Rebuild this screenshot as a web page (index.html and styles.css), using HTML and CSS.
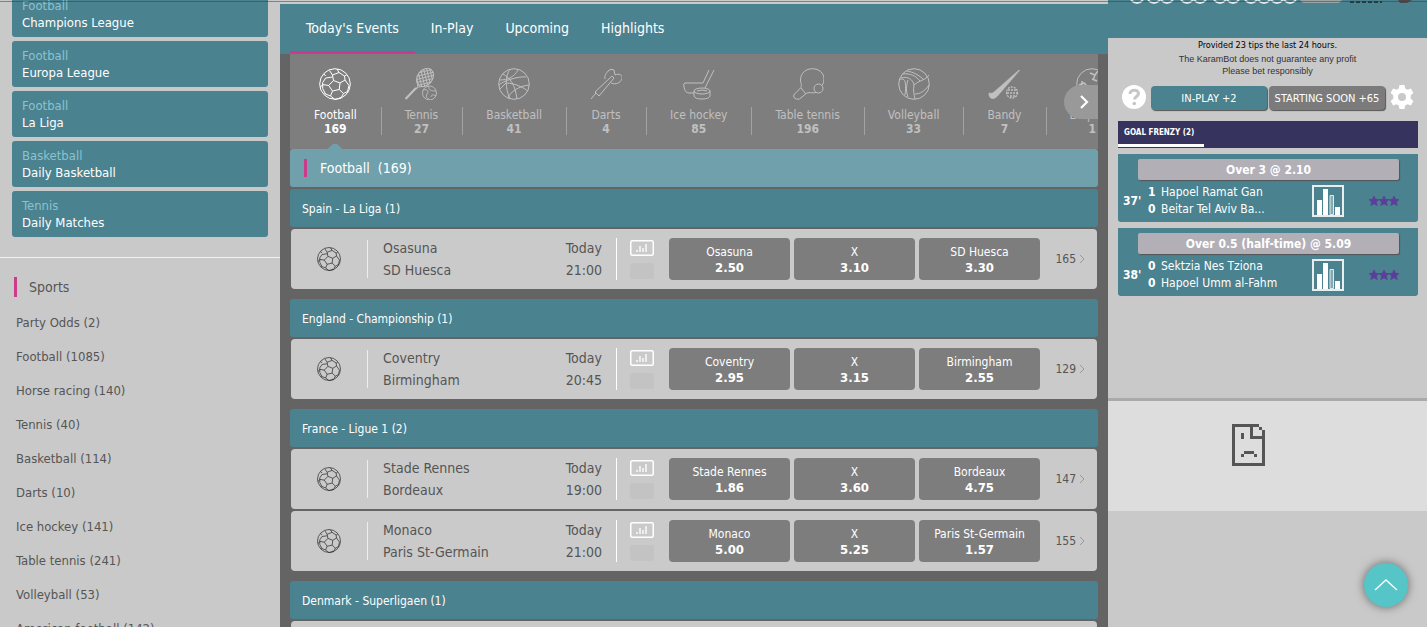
FILE: index.html
```
<!DOCTYPE html>
<html lang="en">
<head>
<meta charset="utf-8">
<title>Today's Events</title>
<link rel="stylesheet" href="styles.css">
</head>
<body>
<svg class="defs" aria-hidden="true">
<symbol id="ball" viewBox="0 0 32 32"><g fill="none" stroke="currentColor" stroke-linejoin="round"><circle cx="16" cy="16" r="15.3"/><path d="M14.500 12.500l6.500 2.500-.8 6.500-6.700 1.500-3.800-5.500zM14.500 12.500l-1-5.500M21 15l5-3M20.200 21.500l4.300 4M13.500 23l-2 5M9.700 17.500l-6-1M13.500 7l6.500-2.500 5.500 3.500.5 4 4 5.500-1.500 6-4 2-2.500 4.500-6 1.500-4.500-3.500-5-2-2.800-5.500 0-6 3-4.500 6.800-1M20 4.500l-2-3.500M13.500 7l-3-4.500M25.500 8l2-1M28.500 23.500l1 .5M22 30l-1.500-.5M6.500 26l-1-.5M3.700 16.500l-2.500 3M6.700 8l-1.700-2"/></g></symbol>
<symbol id="stats" viewBox="0 0 24 16"><rect x=".75" y=".75" width="22.500" height="14.500" rx="1.500" fill="none" stroke="#fff" stroke-width="1.500"/><path d="M6 12h2v-2h-2zM9 12h2v-6h-2zM12 12h2v-4h-2zM15 12h2v-8h-2z" fill="#eee"/></symbol>
<symbol id="chart" viewBox="0 0 32 32"><rect x="1" y="1" width="30" height="30" fill="none" stroke="#e8eeee" stroke-width="2"/><path d="M5 15h5v15h-5zM11 4h5v26h-5zM23 22h5v8h-5z" fill="#fff"/><path d="M18 10.500h3.500v19h-3.500z" fill="#84a9b1" stroke="#dfe9ea"/></symbol>
<symbol id="stars" viewBox="0 0 30 10"><path fill="#5b3e99" stroke="#5b3e99" stroke-width=".7" d="M5 0l1.500 3.300 3.500.3-2.700 2.400.9 3.600-3.200-1.900-3.200 1.900.9-3.600-2.700-2.400 3.500-.3zM15 0l1.500 3.300 3.500.3-2.700 2.400.9 3.600-3.200-1.900-3.200 1.900.9-3.600-2.700-2.400 3.500-.3zM25 0l1.500 3.300 3.500.3-2.700 2.400.9 3.600-3.200-1.900-3.200 1.900.9-3.600-2.700-2.400 3.500-.3z"/></symbol>
</svg>
<div class="app">
<aside class="side">
  <nav class="quick" aria-label="Quick links">
    <a href="#"><span>Football</span><b>Champions League</b></a>
    <a href="#"><span>Football</span><b>Europa League</b></a>
    <a href="#"><span>Football</span><b>La Liga</b></a>
    <a href="#"><span>Basketball</span><b>Daily Basketball</b></a>
    <a href="#"><span>Tennis</span><b>Daily Matches</b></a>
  </nav>
  <section class="sports">
    <h2>Sports</h2>
    <nav aria-label="Sports">
      <a href="#">Party Odds (2)</a><a href="#">Football (1085)</a><a href="#">Horse racing (140)</a><a href="#">Tennis (40)</a><a href="#">Basketball (114)</a><a href="#">Darts (10)</a><a href="#">Ice hockey (141)</a><a href="#">Table tennis (241)</a><a href="#">Volleyball (53)</a><a href="#">American football (142)</a>
    </nav>
  </section>
</aside>
<main class="main">
  <nav class="tabs" aria-label="Events"><a class="on" href="#">Today's Events</a><a href="#">In-Play</a><a href="#">Upcoming</a><a href="#">Highlights</a></nav>
  <div class="content">
    <div class="carousel">
      <button class="sport on"><svg><use href="#ball"/></svg><span>Football</span><b>169</b></button>
      <button class="sport"><svg viewBox="0 0 32 32"><defs><pattern id="mesh" width="3" height="3" patternUnits="userSpaceOnUse" patternTransform="rotate(38)"><path d="M0 0h3M0 0v3" stroke="currentColor" stroke-width="1.800"/></pattern></defs><ellipse cx="20" cy="9.500" rx="7.500" ry="10" transform="rotate(38 20 9.500)" fill="url(#mesh)" stroke="currentColor"/><path d="M13 15q0 4-2 6M17.500 18.500q-4-.5-6.500 2.500" fill="none" stroke="currentColor"/><path d="M11 20l-10.500 11" stroke="currentColor" stroke-width="2.200"/><g fill="none" stroke="currentColor" stroke-width=".9"><circle cx="24.500" cy="25" r="7"/><path d="M18 22c5-1 6 1 4 4s1 5 3 5.500M24 18c-1 4 2 5 7 5M31 28c-3-2-5-1-5 1"/></g></svg><span>Tennis</span><b>27</b></button>
      <button class="sport"><svg viewBox="0 0 32 32"><g fill="none" stroke="currentColor"><circle cx="16" cy="16" r="15.300"/><path d="M5 6c7 4 12 10 14 25M12 1c-5 7-5 19 0 30M1 17c4-4 19-9 27-8M2 12c8 0 14-3 18-10M8 15c9 0 18 5 22 8M10 30c2-6 11-12 21-13M2 21l6-6"/></g></svg><span>Basketball</span><b>41</b></button>
      <button class="sport"><svg viewBox="0 0 32 32"><g fill="none" stroke="currentColor"><path d="M1 31l5-6M5 24l4 4L24 10l-2-2zM15 11c-1-4 2-6 3-8q3-3 6-1l1 5c4-2 8 0 7 4-2 4-6 6-11 4"/></g></svg><span>Darts</span><b>4</b></button>
      <button class="sport"><svg viewBox="0 0 32 32"><g fill="none" stroke="currentColor"><path d="M26 2l-6 13H2q-2 0-1 4 1 6 5 6h5M31 2l-9 18"/><ellipse cx="19" cy="23" rx="8" ry="3"/><path d="M11 23v5q1 3 8 3t8-3v-5M14 23q5-2 10 0"/></g></svg><span>Ice hockey</span><b>85</b></button>
      <button class="sport"><svg viewBox="0 0 32 32"><g fill="none" stroke="currentColor"><path d="M24.500 24.500c-5 1-8-1-11 1.500l-6 5q-3 1-5-1-2-2 0-4l6-6c2-2 0-5 0-8C8.500 5 14 .7 20.500 .7 27 .7 32 5 32 11q0 4-2 6.500M9 20l5 6"/><circle cx="26.500" cy="20.500" r="4.500"/></g></svg><span>Table tennis</span><b>196</b></button>
      <button class="sport"><svg viewBox="0 0 32 32"><g fill="none" stroke="currentColor"><circle cx="16" cy="16" r="15.300"/><path d="M16 17c-1-6-7-9-13-7M16 17c4-4 12-5 15-10M16 17c-1 5 0 10 1 14M1 12c5-3 8 0 6 15M9 3c6 1 12 4 17 9M5 6c7-1 13 2 17 7M10 12c-2 6-2 12 0 17M17 26c5 0 10-3 14-9"/></g></svg><span>Volleyball</span><b>33</b></button>
      <button class="sport"><svg viewBox="0 0 32 32"><path d="M31.500 2.500L9.500 28q-3 4-7 2-2-2-1.500-5 3 1 5-1L31 2z" fill="currentColor" stroke="currentColor" stroke-width=".6"/><circle cx="24" cy="24.500" r="5.500" fill="none" stroke="currentColor" stroke-width="1.300" stroke-dasharray="2 1"/><path d="M20 22h9M19 25h10M22 28h5" stroke="currentColor" stroke-width="1.400" stroke-dasharray="2 1"/></svg><span>Bandy</span><b>7</b></button>
      <button class="sport"><svg viewBox="0 0 32 32"><g fill="none" stroke="currentColor"><circle cx="16" cy="16" r="15.300"/><path d="M14 5l5 2-2 5M19 7l3-4M3 17l5-2 3 3M6 13v6M16 11l5 2" stroke-width="1.500"/></g></svg><span>E-Sports</span><b>1</b></button>
      <button class="next" aria-label="More sports"><svg viewBox="0 0 14 14"><path d="M4 1l6 6-6 6" fill="none" stroke="#fff" stroke-width="2.200"/></svg></button>
    </div>
    <h1 class="title">Football&nbsp; (169)</h1>
    <section class="league"><h2>Spain - La Liga (1)</h2>
      <article class="match"><svg class="ico"><use href="#ball"/></svg><div class="teams"><span>Osasuna</span><span>SD Huesca</span></div><div class="when"><span>Today</span><time>21:00</time></div><div class="media"><svg><use href="#stats"/></svg><i></i></div><div class="odds"><button>Osasuna<b>2.50</b></button><button>X<b>3.10</b></button><button>SD Huesca<b>3.30</b></button></div><a class="more" href="#">165<svg viewBox="0 0 6 10"><path d="M1 1l4 4-4 4"/></svg></a></article>
    </section>
    <section class="league"><h2>England - Championship (1)</h2>
      <article class="match"><svg class="ico"><use href="#ball"/></svg><div class="teams"><span>Coventry</span><span>Birmingham</span></div><div class="when"><span>Today</span><time>20:45</time></div><div class="media"><svg><use href="#stats"/></svg><i></i></div><div class="odds"><button>Coventry<b>2.95</b></button><button>X<b>3.15</b></button><button>Birmingham<b>2.55</b></button></div><a class="more" href="#">129<svg viewBox="0 0 6 10"><path d="M1 1l4 4-4 4"/></svg></a></article>
    </section>
    <section class="league"><h2>France - Ligue 1 (2)</h2>
      <article class="match"><svg class="ico"><use href="#ball"/></svg><div class="teams"><span>Stade Rennes</span><span>Bordeaux</span></div><div class="when"><span>Today</span><time>19:00</time></div><div class="media"><svg><use href="#stats"/></svg><i></i></div><div class="odds"><button>Stade Rennes<b>1.86</b></button><button>X<b>3.60</b></button><button>Bordeaux<b>4.75</b></button></div><a class="more" href="#">147<svg viewBox="0 0 6 10"><path d="M1 1l4 4-4 4"/></svg></a></article>
      <article class="match"><svg class="ico"><use href="#ball"/></svg><div class="teams"><span>Monaco</span><span>Paris St-Germain</span></div><div class="when"><span>Today</span><time>21:00</time></div><div class="media"><svg><use href="#stats"/></svg><i></i></div><div class="odds"><button>Monaco<b>5.00</b></button><button>X<b>5.25</b></button><button>Paris St-Germain<b>1.57</b></button></div><a class="more" href="#">155<svg viewBox="0 0 6 10"><path d="M1 1l4 4-4 4"/></svg></a></article>
    </section>
    <section class="league"><h2>Denmark - Superligaen (1)</h2><article class="match"></article></section>
  </div>
</main>
<aside class="bot">
  <header class="banner"><svg viewBox="0 0 300 4"><g fill="none" stroke="#e4eaea" stroke-width="1.800"><path d="M11 0q6 6 12 0M28 0q6 6 12 0M41 0q6 6 12 0M61 0q6 6 12 0M74 0q6 6 12 0M94 0q6 6 12 0M107 0q6 6 12 0M125 0q6 6 12 0M138 0q6 6 12 0M151 0q6 6 12 0M164 0q6 6 12 0"/></g><path d="M180 0h42l-3 3h-36z" fill="#9aa3a6"/><path d="M230 2h32" stroke="#25383c" stroke-width="2" stroke-dasharray="4 2"/><path d="M278 0h14l-5 3h-7z" fill="#4a4a4d"/></svg></header>
  <div class="info"><p class="tips">Provided 23 tips the last 24 hours.</p><p>The KaramBot does not guarantee any profit</p><p>Please bet responsibly</p></div>
  <div class="modes">
    <button class="icon" aria-label="Help"><svg viewBox="0 0 24 24"><circle cx="12" cy="12" r="12" fill="#fff"/><path d="M8 9c0-5 8.500-5 8.500-.5 0 3-4 3-4 6" fill="none" stroke="#c6c6c6" stroke-width="3"/><circle cx="12.300" cy="18.500" r="1.800" fill="#c6c6c6"/></svg></button>
    <button class="mode on">IN-PLAY +2</button><button class="mode">STARTING SOON +65</button>
    <button class="icon" aria-label="Settings"><svg viewBox="0 0 24 24"><path fill="#fff" fill-rule="evenodd" d="M9.500 0h5l.7 3.500 2.300 1.300 3.400-1.300 2.500 4.400-2.700 2.400v3.400l2.700 2.400-2.500 4.400-3.400-1.300-2.300 1.300-.7 3.500h-5l-.7-3.500-2.300-1.300-3.400 1.300-2.500-4.400 2.700-2.400v-3.400l-2.700-2.400 2.500-4.400 3.400 1.300 2.300-1.300zM12 8a4 4 0 1 0 0 8 4 4 0 0 0 0-8z"/></svg></button>
  </div>
  <div class="frenzy"><a href="#">GOAL FRENZY (2)</a></div>
  <article class="tip"><button>Over 3 @ 2.10</button><div class="row"><b class="min">37'</b><div class="score"><b>1</b><span>Hapoel Ramat Gan</span><b>0</b><span>Beitar Tel Aviv Ba...</span></div><svg class="chart"><use href="#chart"/></svg><svg class="stars"><use href="#stars"/></svg></div></article>
  <article class="tip"><button>Over 0.5 (half-time) @ 5.09</button><div class="row"><b class="min">38'</b><div class="score"><b>0</b><span>Sektzia Nes Tziona</span><b>0</b><span>Hapoel Umm al-Fahm</span></div><svg class="chart"><use href="#chart"/></svg><svg class="stars"><use href="#stars"/></svg></div></article>
  <div class="frame"><svg viewBox="0 0 33 42" shape-rendering="crispEdges"><path fill="#555" d="M0 0h27v3h3v3h3v36H0zM3 3v36h27V15H18V3zM21 3v9h9V6h-3V3zM9 9h3v6H9zM12 27h10v3h3v3h-3v-3H12v3H9v-3h3z" fill-rule="evenodd"/></svg></div>
</aside>
</div>
<button class="up" aria-label="Back to top"><svg viewBox="0 0 24 12"><path d="M1 11L12 1l11 10" fill="none" stroke="#fff" stroke-width="1.300"/></svg></button>
</body>
</html>
```
FILE: styles.css
```
* { box-sizing: border-box; }
body { margin: 0; padding-bottom: 5px; height: 100vh; overflow: hidden; background: #fff; font: 12px/16px "DejaVu Sans Condensed", "Noto Sans", sans-serif; color: #555; }
h1, h2, p { margin: 0; font-weight: 400; }
a { color: inherit; text-decoration: none; }
button { font: inherit; color: #fff; border: 0; padding: 0; }
svg { display: block; }
.defs { position: absolute; width: 0; height: 0; }
.app { display: grid; grid-template-columns: 280px minmax(0, 1fr) 319px; height: 100%; overflow: hidden; }
.app::before { content: ""; position: absolute; top: 1px; left: 0; right: 0; height: 1px; background: rgba(60, 60, 60, .5); z-index: 2; }
.app > * { min-height: 0; overflow: hidden; }
.side, .bot { background: #c9c9c9; }
.quick { display: flex; flex-direction: column; justify-content: flex-end; gap: 4px; padding: 0 12px; height: 237px; }
.quick a { flex: none; display: flex; flex-direction: column; height: 46px; padding: 6px 10px; border-radius: 3px; background: #4b8290; font-size: 13px; line-height: 17px; }
.quick span { color: #8ac3cf; }
.quick b { color: #fff; font-weight: 400; }
.sports { margin-top: 20px; border-top: 1px solid #f2f2f2; padding: 19px 16px 0 14px; }
.sports h2 { border-left: 3px solid #cc3b8b; padding-left: 12px; font-size: 14px; line-height: 20px; }
.sports nav { display: flex; flex-direction: column; padding: 9px 2px; }
.sports nav a { font-size: 13px; line-height: 34px; white-space: nowrap; }
.main { background: #646464; border-top: 4px solid #cacaca; }
.tabs { display: flex; height: 50px; padding: 0 10px; background: #4b8290; color: #fff; font-size: 14px; line-height: 48px; }
.tabs a { padding: 0 16px; border-bottom: 3px solid transparent; }
.tabs .on { border-color: #cc3b8b; }
.content { padding: 0 10px; }
.carousel { position: relative; display: flex; height: 95px; overflow: hidden; background: #7e7e7e; }
.sport { position: relative; flex: none; display: flex; flex-direction: column; align-items: center; padding: 14px 24px 0; background: none; color: #c0c0c0; line-height: 14px; }
.sport svg { width: 32px; height: 32px; margin-bottom: 8px; }
.sport + .sport::before { content: ""; position: absolute; left: 0; top: 53px; width: 1px; height: 28px; background: #a2a2a2; }
.sport.on { color: #fff; }
.sport.on::after { content: ""; position: absolute; left: 50%; bottom: -12px; width: 16px; height: 16px; margin-left: -8px; border-radius: 5px; transform: rotate(45deg); background: #70a0ac; }
.next { position: absolute; right: 0; top: 31px; width: 34px; height: 34px; padding-left: 5px; display: grid; place-items: center; background: #999; border-radius: 17px 0 0 17px; }
.next svg { width: 14px; height: 14px; }
.title { position: relative; height: 38px; padding: 0 14px; display: flex; align-items: center; border-radius: 3px; background: #70a0ac; color: #fff; font-size: 14px; }
.title::before { content: ""; width: 3px; height: 18px; margin-right: 13px; background: #cc3b8b; }
.league { margin-bottom: 10px; padding-top: 2px; }
.league + .league { padding-top: 0; }
.league h2 { height: 38px; padding: 0 12px; border-radius: 3px; background: #4b8290; color: #fff; font-size: 12px; line-height: 40px; }
.match { display: flex; align-items: center; height: 60px; margin: 2px 1px 0; border-radius: 4px; background: #cacaca; }
.ico { flex: none; width: 24px; height: 24px; margin: 0 26px; color: #333; }
.teams, .when { display: flex; flex-direction: column; font-size: 14px; line-height: 22px; }
.teams { flex: 1; border-left: 1px solid #eee; padding-left: 15px; height: 38px; justify-content: center; }
.when { border-right: 1px solid #fff; padding-right: 14px; text-align: right; height: 42px; justify-content: center; }
.media { display: flex; flex-direction: column; gap: 7px; margin: 0 15px 0 13px; }
.media svg { width: 24px; height: 16px; }
.media i { width: 24px; height: 16px; border-radius: 2px; background: #c3c3c3; }
.odds { display: flex; gap: 4px; }
.odds button { display: flex; flex-direction: column; align-items: center; justify-content: center; width: 121px; height: 42px; padding-top: 1px; border-radius: 4px; background: #7d7d7d; }
.odds b { font-size: 13px; }
.more { display: flex; align-items: center; justify-content: flex-end; gap: 3px; width: 57px; padding-right: 12px; }
.more svg { width: 6px; height: 10px; fill: none; stroke: #999; }
.banner { height: 38px; background: #4a828f; }
.banner svg { width: 300px; height: 4px; margin-left: 12px; }
.info { font-family: "Liberation Sans", sans-serif; font-size: 9px; line-height: 12px; text-align: center; color: #333; }
.info .tips { font: 9px/15px "DejaVu Sans Condensed", sans-serif; color: #000; }
.modes { display: flex; justify-content: center; gap: 2px; padding: 6px 13px 0 14px; }
.icon { width: 24px; background: none; }
.icon:first-child { margin-right: auto; }
.icon:last-child { margin-left: auto; }
.icon svg { width: 24px; height: 24px; }
.mode { width: 116px; height: 24px; margin-top: 3px; padding-top: 1px; border-radius: 4px; background: #7b7b7b; box-shadow: 1px 1px 1px #555; font-size: 11px; white-space: nowrap; }
.mode.on { background: #4a828f; }
.frenzy { height: 27px; margin: 11px 9px 0 10px; background: #36345e; color: #fff; font-size: 8px; font-weight: 700; }
.frenzy a { display: block; width: 86px; height: 26px; padding-left: 6px; border-bottom: 3px solid #fff; line-height: 23px; }
.tip { height: 68px; margin: 6px 9px 0 10px; padding: 5px 0 0; background: #4a828f; color: #fff; border-radius: 0 0 3px 3px; }
.tip button { display: block; width: calc(100% - 39px); margin-left: 20px; height: 21px; border-radius: 2px; background: #b2afb7; box-shadow: 1px 1px 1px #555; font-weight: 700; }
.row { display: flex; align-items: center; padding: 4px 19px 0 5px; }
.min { width: 25px; }
.score { flex: 1; display: grid; grid-template-columns: 13px 1fr; line-height: 17px; }
.chart { width: 32px; height: 32px; margin-right: 25px; }
.stars { width: 30px; height: 10px; }
.frame { margin-top: 102px; height: 113px; border-top: 3px solid #aaa; padding-top: 23px; padding-right: 39px; background: #ddd; }
.frame svg { width: 33px; height: 42px; margin: 0 auto; }
.up { position: fixed; right: 19px; bottom: 25px; width: 44px; height: 44px; display: grid; place-items: center; border-radius: 50%; background: #55c5c8; box-shadow: 0 0 8px 1px #777; }
.up svg { width: 24px; height: 12px; }
```
